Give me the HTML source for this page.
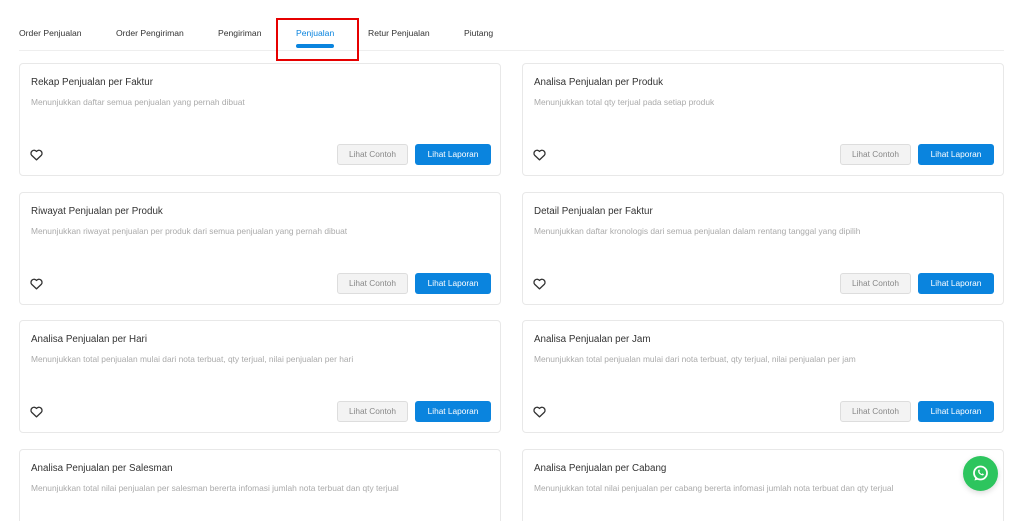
<!DOCTYPE html>
<html><head><style>
*{box-sizing:border-box;margin:0;padding:0}
html,body{width:1024px;height:521px;overflow:hidden}
body{background:#fff;font-family:"Liberation Sans",sans-serif;position:relative}
.tab{position:absolute;top:28px;font-size:8.6px;color:#333}
.line{position:absolute;left:19px;top:50px;width:985px;height:1px;background:#eee}
.card{position:absolute;width:482px;height:113px;border:1px solid #e8e8e8;border-radius:4px;background:#fff}
.card h3{position:absolute;left:11px;top:13px;font-size:9.8px;font-weight:normal;color:#333}
.card p{position:absolute;left:11px;top:33px;font-size:8.4px;color:#aaa}
.b1{position:absolute;left:317px;top:80px;width:71px;height:21px;border:1px solid #ddd;background:#f3f3f3;border-radius:3px;font-size:8.3px;color:#888;text-align:center;line-height:19px}
.b2{position:absolute;left:395px;top:80px;width:76px;height:21px;background:#0a84de;border-radius:3px;font-size:8.3px;color:#fff;text-align:center;line-height:21px}
.heart{position:absolute;left:10px;top:85px}
</style></head><body>
<div class="tab" style="left:19px">Order Penjualan</div>
<div class="tab" style="left:116px">Order Pengiriman</div>
<div class="tab" style="left:218px">Pengiriman</div>
<div class="tab" style="left:296px;color:#0a84de">Penjualan</div>
<div class="tab" style="left:368px">Retur Penjualan</div>
<div class="tab" style="left:464px">Piutang</div>
<div class="line"></div>
<div style="position:absolute;left:296px;top:44px;width:38px;height:4px;border-radius:2px;background:#0a84de"></div>
<div style="position:absolute;left:276px;top:18px;width:83px;height:43px;border:2px solid #e60000"></div>

<div class="card" style="left:19px;top:63px"><h3>Rekap Penjualan per Faktur</h3><p>Menunjukkan daftar semua penjualan yang pernah dibuat</p><svg class="heart" width="13" height="12" viewBox="0 0 24 22"><path d="M12 20L3 11.5A5 5 0 0 1 12 4.5A5 5 0 0 1 21 11.5Z" fill="none" stroke="#333" stroke-width="2.4" stroke-linejoin="round"/></svg><div class="b1">Lihat Contoh</div><div class="b2">Lihat Laporan</div></div>
<div class="card" style="left:522px;top:63px"><h3>Analisa Penjualan per Produk</h3><p>Menunjukkan total qty terjual pada setiap produk</p><svg class="heart" width="13" height="12" viewBox="0 0 24 22"><path d="M12 20L3 11.5A5 5 0 0 1 12 4.5A5 5 0 0 1 21 11.5Z" fill="none" stroke="#333" stroke-width="2.4" stroke-linejoin="round"/></svg><div class="b1">Lihat Contoh</div><div class="b2">Lihat Laporan</div></div>
<div class="card" style="left:19px;top:192px"><h3>Riwayat Penjualan per Produk</h3><p>Menunjukkan riwayat penjualan per produk dari semua penjualan yang pernah dibuat</p><svg class="heart" width="13" height="12" viewBox="0 0 24 22"><path d="M12 20L3 11.5A5 5 0 0 1 12 4.5A5 5 0 0 1 21 11.5Z" fill="none" stroke="#333" stroke-width="2.4" stroke-linejoin="round"/></svg><div class="b1">Lihat Contoh</div><div class="b2">Lihat Laporan</div></div>
<div class="card" style="left:522px;top:192px"><h3>Detail Penjualan per Faktur</h3><p>Menunjukkan daftar kronologis dari semua penjualan dalam rentang tanggal yang dipilih</p><svg class="heart" width="13" height="12" viewBox="0 0 24 22"><path d="M12 20L3 11.5A5 5 0 0 1 12 4.5A5 5 0 0 1 21 11.5Z" fill="none" stroke="#333" stroke-width="2.4" stroke-linejoin="round"/></svg><div class="b1">Lihat Contoh</div><div class="b2">Lihat Laporan</div></div>
<div class="card" style="left:19px;top:320px"><h3>Analisa Penjualan per Hari</h3><p>Menunjukkan total penjualan mulai dari nota terbuat, qty terjual, nilai penjualan per hari</p><svg class="heart" width="13" height="12" viewBox="0 0 24 22"><path d="M12 20L3 11.5A5 5 0 0 1 12 4.5A5 5 0 0 1 21 11.5Z" fill="none" stroke="#333" stroke-width="2.4" stroke-linejoin="round"/></svg><div class="b1">Lihat Contoh</div><div class="b2">Lihat Laporan</div></div>
<div class="card" style="left:522px;top:320px"><h3>Analisa Penjualan per Jam</h3><p>Menunjukkan total penjualan mulai dari nota terbuat, qty terjual, nilai penjualan per jam</p><svg class="heart" width="13" height="12" viewBox="0 0 24 22"><path d="M12 20L3 11.5A5 5 0 0 1 12 4.5A5 5 0 0 1 21 11.5Z" fill="none" stroke="#333" stroke-width="2.4" stroke-linejoin="round"/></svg><div class="b1">Lihat Contoh</div><div class="b2">Lihat Laporan</div></div>
<div class="card" style="left:19px;top:449px"><h3>Analisa Penjualan per Salesman</h3><p>Menunjukkan total nilai penjualan per salesman bererta infomasi jumlah nota terbuat dan qty terjual</p></div>
<div class="card" style="left:522px;top:449px"><h3>Analisa Penjualan per Cabang</h3><p>Menunjukkan total nilai penjualan per cabang bererta infomasi jumlah nota terbuat dan qty terjual</p></div>

<div style="position:absolute;left:963px;top:456px;width:35px;height:35px;border-radius:50%;background:#2dc55e;box-shadow:0 2px 6px rgba(0,0,0,.15)">
<svg width="35" height="35" viewBox="0 0 35 35"><circle cx="17.5" cy="17" r="6.5" fill="none" stroke="#fff" stroke-width="1.8"/><path d="M12.5 21L11.5 24.5L15 23.5" fill="#fff"/><path d="M15 14.5q0 4 5 5l1-1.2-1.6-.9-.8.7q-1.6-.8-2.3-2.3l.7-.8-.9-1.6z" fill="#fff"/></svg></div>
</body></html>
